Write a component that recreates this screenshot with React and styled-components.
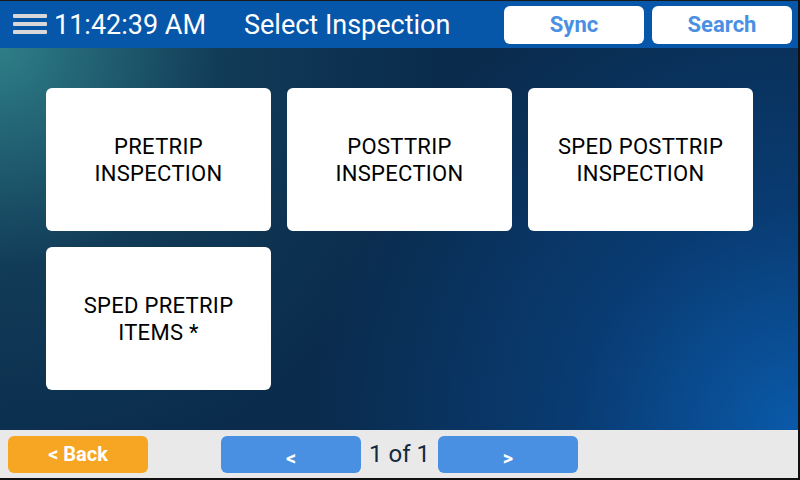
import React from "react";
import styled, { createGlobalStyle } from "styled-components";

const Global = createGlobalStyle`
  html, body { margin: 0; padding: 0; background: #111; }
  body { font-family: Roboto, "Liberation Sans", sans-serif; }
`;

const Screen = styled.div`
  width: 798px;
  height: 477px;
  border-top: 1px solid #1a1a1a;
  border-right: 2px solid #111;
  border-bottom: 2px solid #111;
  display: flex;
  flex-direction: column;
  overflow: hidden;
`;

const Header = styled.header`
  height: 47px;
  background: #0656a9;
  display: flex;
  align-items: center;
  padding: 0 6px 0 13px;
  color: #fff;
`;

const Menu = styled.div`
  width: 34px;
  display: flex;
  flex-direction: column;
  gap: 4px;
  margin-right: 7px;
  margin-top: -1px;
  span {
    height: 4px;
    background: #d8d8d8;
    border-radius: 1px;
  }
`;

const Clock = styled.div`
  font-size: 27px;
  width: 190px;
`;

const Title = styled.div`
  font-size: 27px;
  flex: 1;
`;

const HeadButton = styled.button`
  width: 140px;
  height: 38px;
  margin-left: 8px;
  border: none;
  border-radius: 6px;
  background: #fff;
  color: #4a90e2;
  font-family: Roboto, "Liberation Sans", sans-serif;
  font-weight: bold;
  font-size: 22px;
`;

const Main = styled.main`
  flex: 1;
  background:
    radial-gradient(circle at 0% 0%, #2e7e88 0%, rgba(22,70,95,0.6) 25%, rgba(10,42,74,0) 50%),
    radial-gradient(circle at 100% 100%, #0a5aaa 0%, rgba(8,70,140,0.6) 25%, rgba(10,42,74,0) 55%),
    #0a2b4c;
  padding: 40px 46px;
`;

const Grid = styled.div`
  display: grid;
  grid-template-columns: repeat(3, 225px);
  grid-auto-rows: 143px;
  gap: 16px;
`;

const Card = styled.div`
  background: #fff;
  border-radius: 6px;
  display: flex;
  align-items: center;
  justify-content: center;
  text-align: center;
  color: #000;
  font-size: 22px;
  line-height: 27px;
  letter-spacing: 0.3px;
  padding: 0 6px;
`;

const Footer = styled.footer`
  height: 48px;
  background: #e9e9e9;
  display: flex;
  align-items: center;
  padding: 0 8px;
`;

const FootButton = styled.button`
  width: 140px;
  height: 37px;
  border: none;
  border-radius: 6px;
  background: ${p => p.$tone === "orange" ? "#f6a623" : "#4a90e2"};
  color: #fff;
  font-family: Roboto, "Liberation Sans", sans-serif;
  font-weight: bold;
  font-size: 20px;
  padding-top: ${p => p.$low ? "8px" : "0"};
`;

const Pager = styled.div`
  display: flex;
  align-items: center;
  margin-left: 73px;
`;

const PageText = styled.div`
  font-size: 24px;
  color: #142a40;
  width: 77px;
  text-align: center;
`;

const items = [
  ["PRETRIP", "INSPECTION"],
  ["POSTTRIP", "INSPECTION"],
  ["SPED POSTTRIP", "INSPECTION"],
  ["SPED PRETRIP", "ITEMS *"],
];

export default function App() {
  return (
    <Screen>
      <Global />
      <Header>
        <Menu><span /><span /><span /></Menu>
        <Clock>11:42:39 AM</Clock>
        <Title>Select Inspection</Title>
        <HeadButton>Sync</HeadButton>
        <HeadButton>Search</HeadButton>
      </Header>
      <Main>
        <Grid>
          {items.map((t, i) => (
            <Card key={i}>{t[0]}<br />{t[1]}</Card>
          ))}
        </Grid>
      </Main>
      <Footer>
        <FootButton $tone="orange">&lt; Back</FootButton>
        <Pager>
          <FootButton $low>&lt;</FootButton>
          <PageText>1 of 1</PageText>
          <FootButton $low>&gt;</FootButton>
        </Pager>
      </Footer>
    </Screen>
  );
}
